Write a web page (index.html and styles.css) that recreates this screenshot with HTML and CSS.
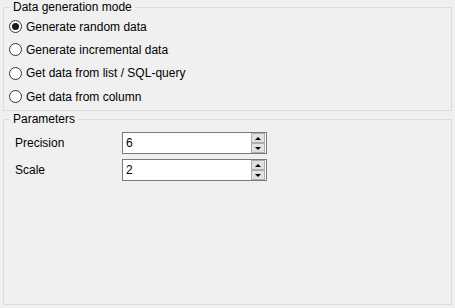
FILE: index.html
```html
<!DOCTYPE html>
<html>
<head>
<meta charset="utf-8">
<link rel="stylesheet" href="styles.css">
</head>
<body>
<div class="page">
  <fieldset class="group group-mode">
    <legend>Data generation mode</legend>
    <label class="radio-row"><span class="radio checked"></span><span>Generate random data</span></label>
    <label class="radio-row"><span class="radio"></span><span>Generate incremental data</span></label>
    <label class="radio-row"><span class="radio"></span><span>Get data from list / SQL-query</span></label>
    <label class="radio-row"><span class="radio"></span><span>Get data from column</span></label>
  </fieldset>
  <fieldset class="group group-params">
    <legend>Parameters</legend>
    <div class="param-row">
      <span class="param-label">Precision</span>
      <div class="spin">
        <span class="spin-value">6</span>
        <div class="spin-buttons">
          <span class="spin-btn"><span class="arrow up"></span></span>
          <span class="spin-btn"><span class="arrow down"></span></span>
        </div>
      </div>
    </div>
    <div class="param-row">
      <span class="param-label">Scale</span>
      <div class="spin">
        <span class="spin-value">2</span>
        <div class="spin-buttons">
          <span class="spin-btn"><span class="arrow up"></span></span>
          <span class="spin-btn"><span class="arrow down"></span></span>
        </div>
      </div>
    </div>
  </fieldset>
</div>
</body>
</html>
```
FILE: styles.css
```css
html, body {
  margin: 0;
  padding: 0;
  background: #f0f0f0;
}
body {
  font-family: "Liberation Sans", Arial, sans-serif;
  font-size: 12px;
  color: #000;
}
.page {
  width: 449px;
  padding-left: 3px;
  display: flex;
  flex-direction: column;
}
.group {
  margin: 0;
  padding: 0 0 0 11px;
  border: 1px solid #dcdcdc;
  min-width: 0;
  box-sizing: border-box;
}
.group legend {
  margin-left: -5px;
  padding: 0 3px;
  line-height: 15px;
  height: 15px;
}
.group-mode {
  height: 111px;
  padding-left: 5px;
}
.group-mode legend {
  margin-left: 1px;
}
.radio-row {
  display: flex;
  align-items: center;
  height: 23.3px;
  gap: 4px;
}
.radio {
  width: 11px;
  height: 11px;
  border: 1px solid #333;
  border-radius: 50%;
  background: #fff;
  display: flex;
  align-items: center;
  justify-content: center;
  flex: none;
}
.radio.checked::after {
  content: "";
  width: 7px;
  height: 7px;
  border-radius: 50%;
  background: #1a1a1a;
}
.group-params {
  margin-top: 1px;
  height: 193px;
}
.param-row {
  display: flex;
  align-items: center;
  margin-top: 5px;
  height: 22px;
}
.group-params legend + .param-row {
  margin-top: 5px;
}
.param-label {
  width: 107px;
  flex: none;
}
.spin {
  width: 145px;
  height: 22px;
  box-sizing: border-box;
  border: 1px solid #7a7a7a;
  background: #fff;
  display: flex;
  align-items: center;
  justify-content: space-between;
  padding: 0 1px 0 3px;
}
.spin-buttons {
  display: flex;
  flex-direction: column;
  gap: 0;
}
.spin-btn {
  width: 14px;
  height: 10px;
  box-sizing: border-box;
  border: 1px solid #adadad;
  background: #e1e1e1;
  display: flex;
  align-items: center;
  justify-content: center;
}
.arrow {
  width: 0;
  height: 0;
  border-left: 3.5px solid transparent;
  border-right: 3.5px solid transparent;
}
.arrow.up {
  border-bottom: 3px solid #000;
}
.arrow.down {
  border-top: 3px solid #000;
}
```
